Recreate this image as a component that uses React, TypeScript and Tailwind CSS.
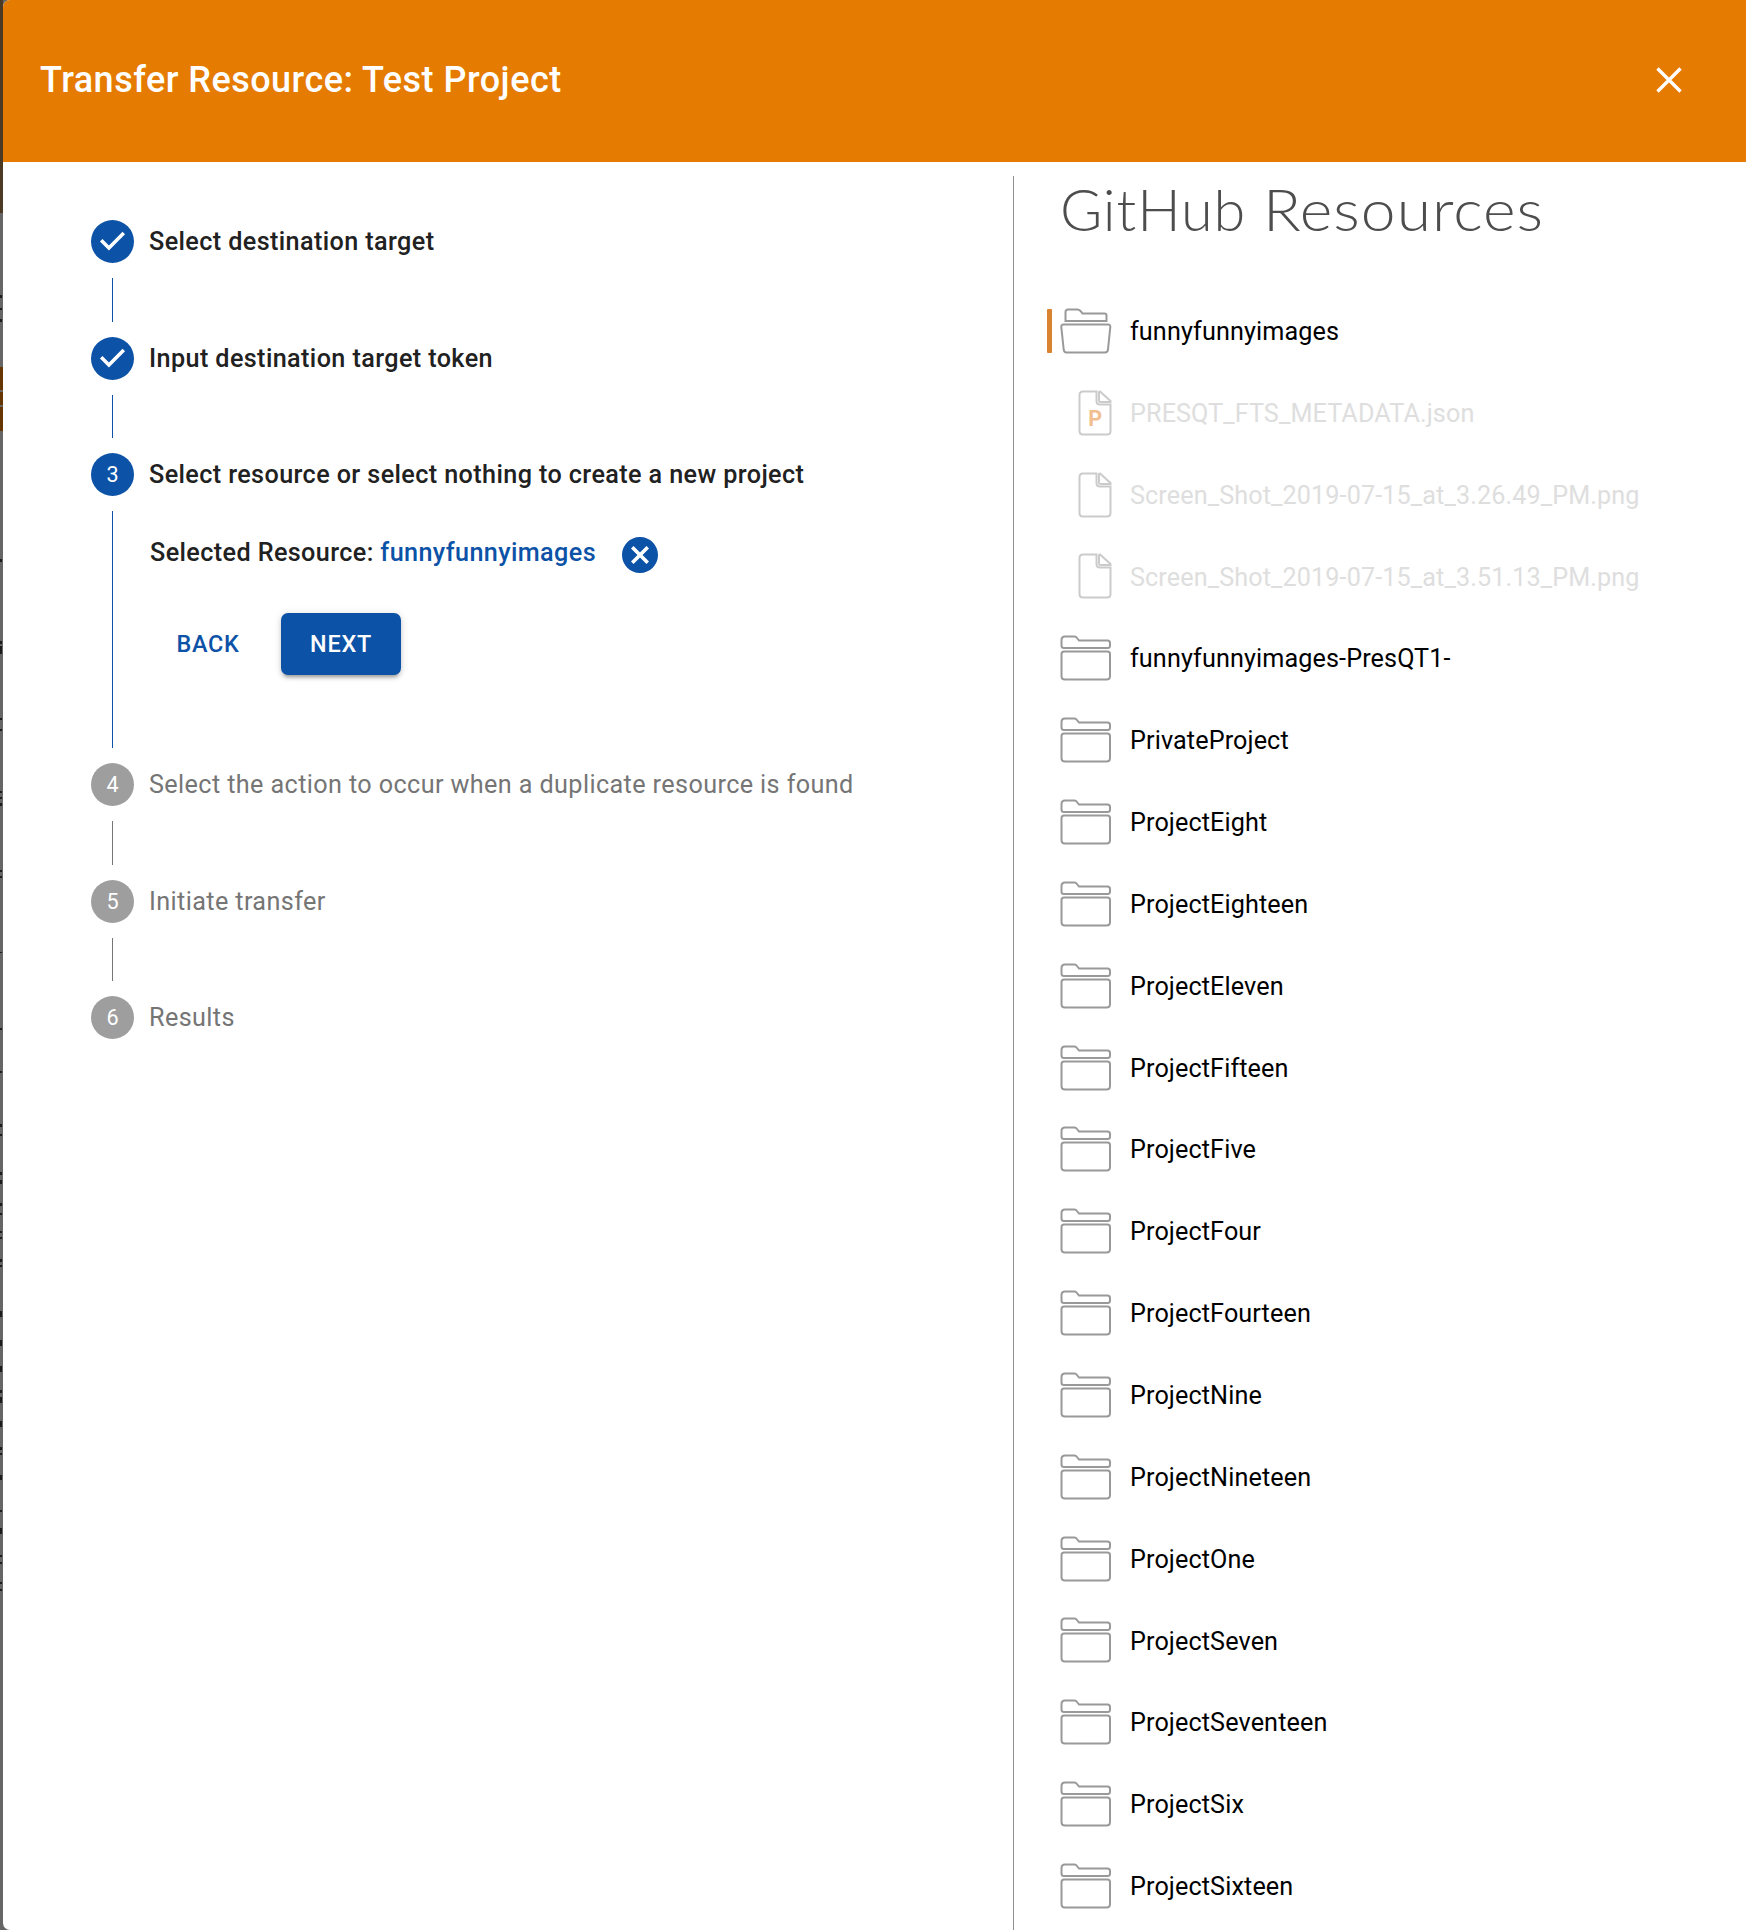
import React from "react";

const BLUE = "#0c52a7";

function Check() {
  return (
    <svg viewBox="0 0 24 24" className="h-[43px] w-[43px] shrink-0">
      <path fill={BLUE} d="M12 0a12 12 0 1 0 0 24 12 12 0 0 0 0-24zm-2 17l-5-5 1.4-1.4 3.6 3.6 7.6-7.6L19 8l-9 9z" />
    </svg>
  );
}

function Step({ n, label, state }: { n: number; label: string; state: "done" | "active" | "todo" }) {
  return (
    <div className="flex h-[43px] items-center">
      {state === "done" ? (
        <Check />
      ) : (
        <span
          className={`flex h-[43px] w-[43px] shrink-0 items-center justify-center rounded-full pt-px text-[21.6px] text-white ${
            state === "active" ? "bg-[#0c52a7]" : "bg-[#9e9e9e]"
          }`}
        >
          {n}
        </span>
      )}
      <span
        className={`ml-[15px] whitespace-nowrap pt-px text-[25.2px] tracking-[0.39px] ${
          state === "todo" ? "font-normal text-[#757575]" : "font-medium text-[#212121]"
        }`}
      >
        {label}
      </span>
    </div>
  );
}

function Line({ blue }: { blue?: boolean }) {
  return <div className={`my-[15px] ml-[21px] h-[43.6px] w-px ${blue ? "bg-[#0c52a7]" : "bg-[#757575]"}`} />;
}

function Folder() {
  return (
    <svg viewBox="0 0 52 46" className="h-[46px] w-[52px]" fill="none" stroke="#999" strokeWidth="2">
      <path d="M1.500 10V5Q1.500 1.500 5 1.500H14.500Q16 1.500 17 3L19 5.500H47.500Q50 5.500 50 8V10.500Q50 13 47.500 13H4Q1.500 13 1.500 10.500Z" />
      <path d="M4 16.500H47.500Q50 16.500 50 19V41Q50 44.500 46.500 44.500H5Q1.500 44.500 1.500 41V19Q1.500 16.500 4 16.500Z" />
    </svg>
  );
}

function OpenFolder() {
  return (
    <svg viewBox="0 0 52 46" className="h-[46px] w-[52px]" fill="none" stroke="#999" strokeWidth="2">
      <path d="M5.500 13V4Q5.500 1.500 8 1.500H17.500Q19 1.500 20.500 3L22.500 5.500H44.500Q46.500 5.500 46.500 7.500V13Z" />
      <path d="M3.500 16.500H48Q50.500 16.500 50.300 19L48 41.500Q47.700 44.500 45 44.500H6.500Q4 44.500 3.700 41.500L1.300 19Q1.200 16.500 3.500 16.500Z" />
    </svg>
  );
}

function File({ p }: { p?: boolean }) {
  return (
    <svg viewBox="0 0 34 46" className="h-[46px] w-[34px]" fill="none" stroke="#cbcbcb" strokeWidth="2">
      <path d="M18.500 1.500H5Q1.500 1.500 1.500 5V41Q1.500 44.500 5 44.500H29Q32.500 44.500 32.500 41V14.500H22Q18.500 14.500 18.500 11Z" />
      <path d="M21 2V10.500Q21 12 22.500 12H32.500V11L22 1.500Z" />
      {p && (
        <text x="17.300" y="35.500" textAnchor="middle" fill="#f2c090" stroke="none" fontFamily="Roboto" fontWeight="700" fontSize="21.500">
          P
        </text>
      )}
    </svg>
  );
}

type Item = { name: string; kind: "open" | "folder" | "file" | "meta" };
const items: Item[] = [
  { name: "funnyfunnyimages", kind: "open" },
  { name: "PRESQT_FTS_METADATA.json", kind: "meta" },
  { name: "Screen_Shot_2019-07-15_at_3.26.49_PM.png", kind: "file" },
  { name: "Screen_Shot_2019-07-15_at_3.51.13_PM.png", kind: "file" },
  ...[
    "funnyfunnyimages-PresQT1-", "PrivateProject", "ProjectEight", "ProjectEighteen", "ProjectEleven",
    "ProjectFifteen", "ProjectFive", "ProjectFour", "ProjectFourteen", "ProjectNine", "ProjectNineteen",
    "ProjectOne", "ProjectSeven", "ProjectSeventeen", "ProjectSix", "ProjectSixteen",
  ].map((name): Item => ({ name, kind: "folder" })),
];

// Slivers of the dimmed page's text that stay visible beside the dialog: [top, height].
const slivers: [number, number][] = [
  [295, 3], [308, 2], [319, 3], [559, 3], [641, 3], [646, 8], [718, 2], [729, 2], [791, 2], [797, 2], [803, 3],
  [870, 2], [876, 2], [952, 1], [1028, 2], [1071, 2], [1124, 3], [1134, 2], [1172, 3], [1180, 4], [1203, 3],
  [1213, 2], [1231, 2], [1237, 2], [1259, 3], [1265, 2], [1311, 6], [1340, 6], [1366, 6], [1390, 3], [1397, 6],
  [1421, 6], [1447, 3], [1453, 2], [1475, 5], [1510, 2], [1528, 6], [1555, 2], [1562, 2], [1582, 2], [1589, 2],
];

export default function App() {
  return (
    <div className="flex h-[1930px] w-[1746px] overflow-hidden bg-[#666] font-['Roboto',sans-serif]">
      <div className="relative flex w-[3px] shrink-0 flex-col">
        <div className="h-[213px] bg-[#4d3a24]" />
        <div className="h-[154px]" />
        <div className="h-[23px] bg-[#663600]" />
        <div className="h-[2px]" />
        <div className="h-[13px] bg-[#663600]" />
        <div className="h-[2px]" />
        <div className="h-[24px] bg-[#663600]" />
        {slivers.map(([top, height]) => (
          <i key={top} className="absolute left-0 w-[2px] bg-[#1c1c1c]" style={{ top, height }} />
        ))}
      </div>
      <div className="flex min-w-0 flex-1 flex-col overflow-hidden rounded-l-[7px] bg-white">
        <header className="flex h-[162px] shrink-0 items-center justify-between bg-[#e57b00] pb-[2px] pl-[37px] pr-[64px]">
          <h1 className="text-[36px] font-medium tracking-[0.48px] text-white">Transfer Resource: Test Project</h1>
          <svg viewBox="0 0 26 26" className="h-[26px] w-[26px]" stroke="white" strokeWidth="3.300">
            <path d="M1.500 1.500L24.500 24.500M24.500 1.500L1.500 24.500" />
          </svg>
        </header>
        <div className="flex min-h-0 flex-1">
          <section className="w-[1010px] shrink-0 pl-[88px] pt-[58px]">
            <Step n={1} label="Select destination target" state="done" />
            <Line blue />
            <Step n={2} label="Input destination target token" state="done" />
            <Line blue />
            <Step n={3} label="Select resource or select nothing to create a new project" state="active" />
            <div className="mb-[15px] ml-[21px] mt-[15px] h-[237px] border-l border-[#0c52a7] pl-[37px] pt-[22px]">
              <div className="flex h-[40px] items-center text-[25.2px] font-medium tracking-[0.39px]">
                <span className="whitespace-pre text-[#212121]">Selected Resource: </span>
                <span className="text-[#0c52a7]">funnyfunnyimages</span>
                <svg viewBox="2 2 20 20" className="ml-[26px] mt-[4px] h-[36px] w-[36px]" fill={BLUE}>
                  <path d="M12 2C6.470 2 2 6.470 2 12s4.470 10 10 10 10-4.470 10-10S17.530 2 12 2zm5 13.590L15.590 17 12 13.410 8.410 17 7 15.590 10.590 12 7 8.410 8.410 7 12 10.590 15.590 7 17 8.410 13.410 12 17 15.590z" />
                </svg>
              </div>
              <div className="mt-[40px] flex text-[23.4px] font-medium tracking-[0.75px]">
                <button className="h-[62px] w-[116px] text-[#0c52a7]">BACK</button>
                <button className="ml-[15px] h-[62px] w-[120px] rounded-[7px] bg-[#0c52a7] text-white shadow-[0_5px_3px_-3px_rgba(0,0,0,0.2),0_3px_4px_0_rgba(0,0,0,0.14),0_1px_8px_0_rgba(0,0,0,0.12)]">
                  NEXT
                </button>
              </div>
            </div>
            <Step n={4} label="Select the action to occur when a duplicate resource is found" state="todo" />
            <Line />
            <Step n={5} label="Initiate transfer" state="todo" />
            <Line />
            <Step n={6} label="Results" state="todo" />
          </section>
          <section className="mt-[14px] min-w-0 flex-1 border-l border-[#8f8f8f] pl-[33px]">
            <h2 className="ml-[13px] h-[114px] whitespace-nowrap font-['Lato'] text-[57.6px] font-light leading-[66px] tracking-[0.9px] text-[#4d4d4d]">
              GitHub <span className="inline-block origin-left scale-x-[1.083]">Resources</span>
            </h2>
            <ul>
              {items.map((it) => {
                const file = it.kind === "file" || it.kind === "meta";
                return (
                  <li key={it.name} className="flex h-[81.85px] items-center">
                    <span className={`h-[44px] w-[5px] rounded-[1px] ${it.kind === "open" ? "bg-[#d9822f]" : ""}`} />
                    <span className="ml-[8px] flex w-[52px] justify-end">
                      {it.kind === "open" ? <OpenFolder /> : it.kind === "folder" ? <Folder /> : <File p={it.kind === "meta"} />}
                    </span>
                    <span className={`ml-[18px] whitespace-nowrap pt-[2px] text-[25.2px] tracking-[0.11px] ${file ? "text-[#dedede]" : "text-black"}`}>
                      {it.name}
                    </span>
                  </li>
                );
              })}
            </ul>
          </section>
        </div>
      </div>
    </div>
  );
}
